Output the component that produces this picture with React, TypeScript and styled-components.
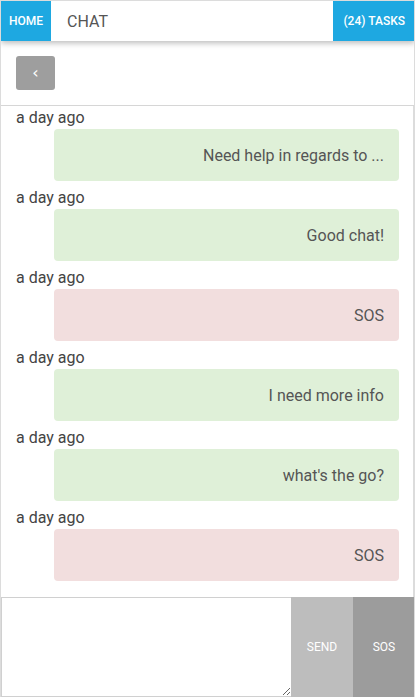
import React from "react";
import styled, { createGlobalStyle } from "styled-components";

type Message = {
  text: string;
  time: string;
  urgent?: boolean;
};

const messages: Message[] = [
  { text: "Need help in regards to ...", time: "a day ago" },
  { text: "Good chat!", time: "a day ago" },
  { text: "SOS", time: "a day ago", urgent: true },
  { text: "I need more info", time: "a day ago" },
  { text: "what's the go?", time: "a day ago" },
  { text: "SOS", time: "a day ago", urgent: true },
];

const App: React.FC = () => {
  return (
    <>
      <GlobalStyle />
      <Frame>
        <Header>
          <NavButton>Home</NavButton>
          <Title>CHAT</Title>
          <NavButton $push>(24) Tasks</NavButton>
        </Header>

        <Toolbar>
          <BackButton aria-label="Back">‹</BackButton>
        </Toolbar>

        <MessageList>
          {messages.map((message, index) => (
            <MessageItem key={index}>
              <Timestamp>{message.time}</Timestamp>
              <Bubble $urgent={message.urgent}>{message.text}</Bubble>
            </MessageItem>
          ))}
        </MessageList>

        <Composer>
          <Input />
          <ActionButton $tone="#bdbdbd">Send</ActionButton>
          <ActionButton $tone="#9c9c9c">SOS</ActionButton>
        </Composer>
      </Frame>
    </>
  );
};

const GlobalStyle = createGlobalStyle`
  html, body {
    margin: 0;
    padding: 0;
    background: #fff;
  }

  body {
    font-family: Roboto, "Noto Sans", sans-serif;
    color: #555;
  }

  * {
    box-sizing: border-box;
  }
`;

const Frame = styled.div`
  height: 100vh;
  display: flex;
  flex-direction: column;
  border: 1px solid #dcdcdc;
  border-bottom: none;
  overflow: hidden;
`;

const Header = styled.header`
  position: relative;
  z-index: 1;
  height: 40px;
  flex-shrink: 0;
  display: flex;
  align-items: stretch;
  background: #fff;
  box-shadow: 0 2px 6px rgba(0, 0, 0, 0.28);
  margin-right: -1px;
`;

const NavButton = styled.button<{ $push?: boolean }>`
  border: none;
  margin: 0;
  margin-left: ${(p) => (p.$push ? "auto" : "0")};
  padding: 0 ${(p) => (p.$push ? "10px" : "8px")};
  background: #1ea8e1;
  color: #fff;
  font-family: Roboto, sans-serif;
  font-size: 12px;
  font-weight: 500;
  text-transform: uppercase;
`;

const Title = styled.h1`
  margin: 0;
  padding-left: 16px;
  align-self: center;
  font-size: 16px;
  font-weight: 400;
  color: #555;
`;

const Toolbar = styled.div`
  flex-shrink: 0;
  padding: 15px;
  border-bottom: 1px solid #d6d6d6;
`;

const BackButton = styled.button`
  display: flex;
  align-items: center;
  justify-content: center;
  width: 39px;
  height: 34px;
  padding: 0 0 2px;
  border: none;
  border-radius: 3px;
  background: #9e9e9e;
  color: #fff;
  font-size: 16px;
  font-family: "DejaVu Sans", sans-serif;
`;

const MessageList = styled.div`
  flex: 1;
  overflow: hidden;
  padding: 1px 14px 0 15px;
  border-right: 1px solid #dcdcdc;
`;

const MessageItem = styled.div`
  margin-bottom: 6px;
`;

const Timestamp = styled.div`
  height: 22px;
  line-height: 22px;
  font-size: 16px;
  color: #444;
`;

const Bubble = styled.div<{ $urgent?: boolean }>`
  margin-left: 38px;
  height: 52px;
  padding: 0 15px;
  display: flex;
  align-items: center;
  justify-content: flex-end;
  border-radius: 4px;
  background: ${(p) => (p.$urgent ? "#f2dede" : "#dff0d8")};
  font-size: 16px;
  color: #555;
`;

const Composer = styled.div`
  height: 100px;
  flex-shrink: 0;
  display: flex;
  margin-right: -1px;
`;

const Input = styled.textarea`
  flex: 1;
  margin: 0;
  border: 1px solid #d0d0d0;
  border-right: none;
  resize: both;
  font-family: Roboto, sans-serif;
`;

const ActionButton = styled.button<{ $tone: string }>`
  width: 62px;
  margin: 0;
  border: none;
  background: ${(p) => p.$tone};
  color: #fff;
  font-family: Roboto, sans-serif;
  font-size: 12px;
  text-transform: uppercase;
`;

export default App;
